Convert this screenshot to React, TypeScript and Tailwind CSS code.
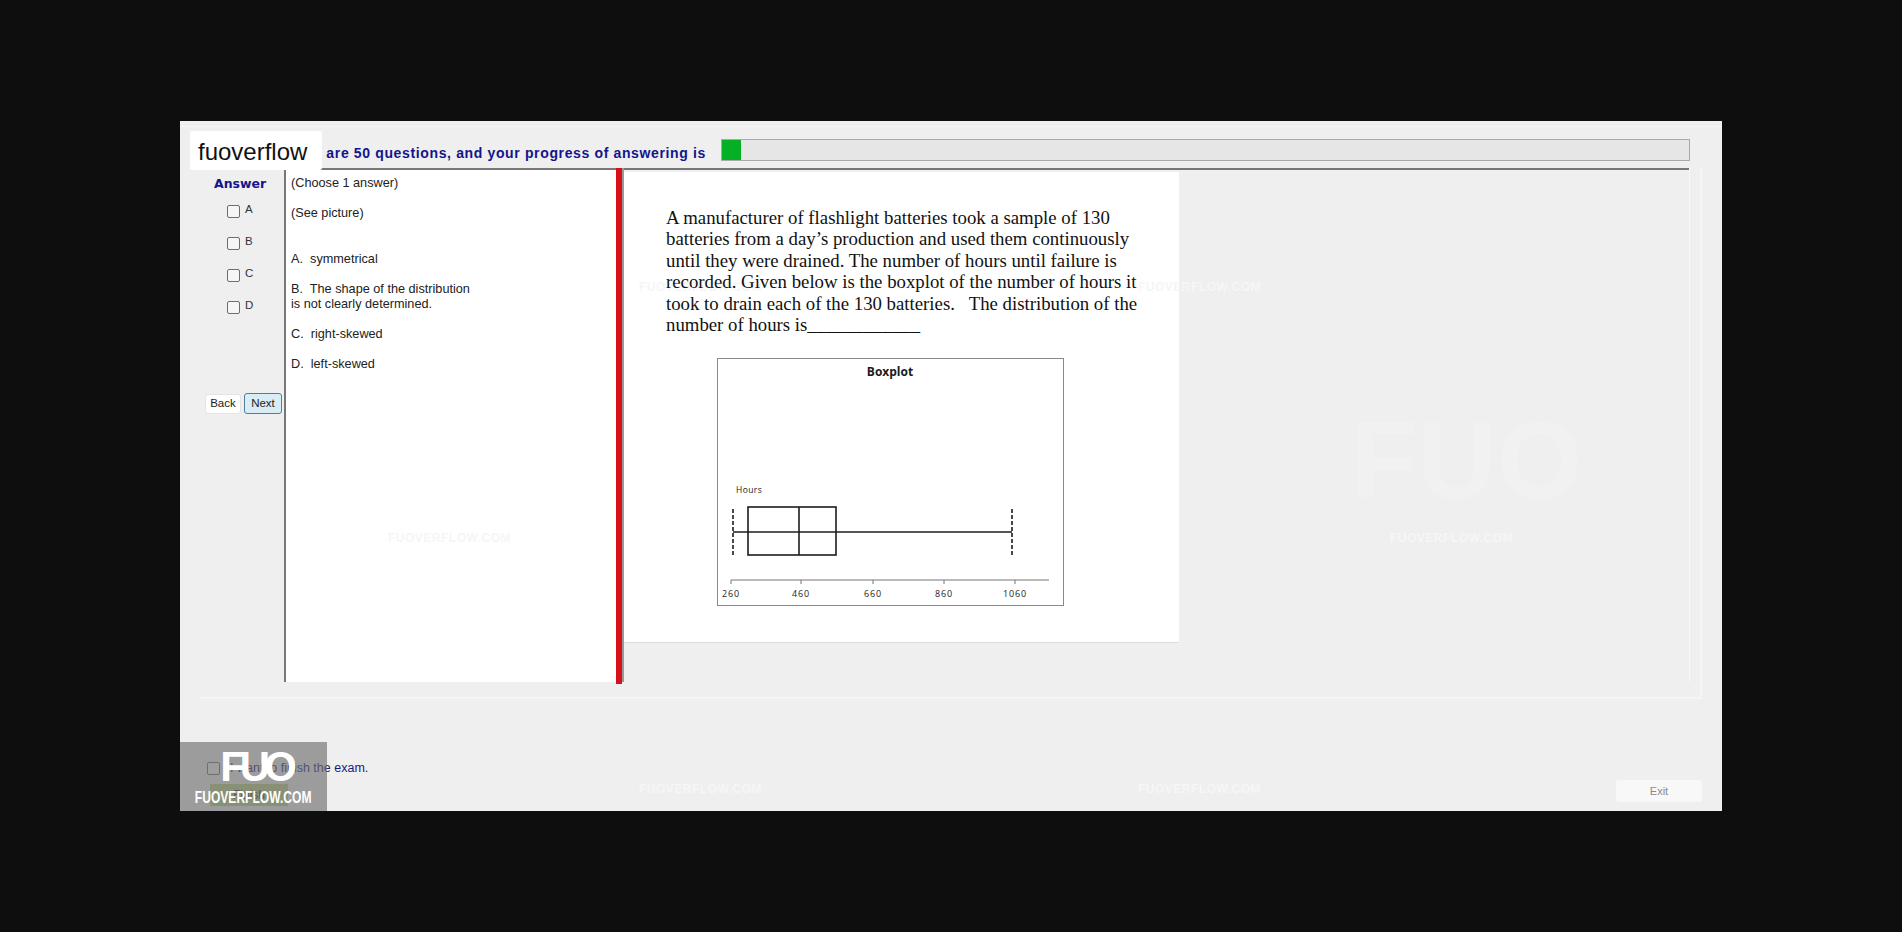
const options = ["A", "B", "C", "D"];

const marks = [
  { left: 388, top: 531 },
  { left: 889, top: 531 },
  { left: 1390, top: 531 },
  { left: 639, top: 782 },
  { left: 1138, top: 782 },
  { left: 639, top: 280 },
  { left: 1138, top: 280 },
];

const bigMarks = [345, 850, 1350];

function Check() {
  return <span className="block h-[13px] w-[13px] shrink-0 rounded-[2px] border border-[#6e6e6e] bg-[#f6f6f6]" />;
}

function Boxplot() {
  const ticks = [
    { x: 13, label: "260" },
    { x: 83, label: "460" },
    { x: 155, label: "660" },
    { x: 226, label: "860" },
    { x: 297, label: "1060" },
  ];
  return (
    <svg width="347" height="248" className="relative z-10 block border border-[#8a8a8a] bg-white">
      <text x="172" y="17" textAnchor="middle" fontSize="12" fontWeight="700" fontFamily="Open Sans, sans-serif" fill="#1a1a1a">
        Boxplot
      </text>
      <text x="18" y="134" fontSize="8.5" letterSpacing="0.4" fontFamily="Open Sans, sans-serif" fill="#222">
        Hours
      </text>
      <g stroke="#1c1c1c" strokeWidth="1.6" fill="none">
        <rect x="30" y="148" width="88" height="48" />
        <line x1="81" y1="148" x2="81" y2="196" />
        <line x1="15" y1="173" x2="294" y2="173" />
        <line x1="15" y1="150" x2="15" y2="197" strokeDasharray="4 2" />
        <line x1="294" y1="150" x2="294" y2="197" strokeDasharray="4 2" />
      </g>
      <line x1="13" y1="221" x2="331" y2="221" stroke="#777" />
      {ticks.map((t) => (
        <g key={t.label}>
          <line x1={t.x} y1="221" x2={t.x} y2="225" stroke="#777" />
          <text x={t.x} y="238" textAnchor="middle" fontSize="9" letterSpacing="0.8" fontFamily="Open Sans, sans-serif" fill="#222">
            {t.label}
          </text>
        </g>
      ))}
    </svg>
  );
}

export default function App() {
  return (
    <div className="relative h-[932px] w-[1902px] overflow-hidden bg-[#0e0e0e] pl-[180px] pt-[121px] font-['Liberation_Sans',sans-serif]">
      {/* Exam window */}
      <div className="relative flex h-[690px] w-[1542px] flex-col bg-[#efefef]">
        <div className="h-[6px] border-b border-[#f6f6f6]" />
        <div className="flex h-[34px] items-start pl-[20px] pt-[12px]">
          <div className="mt-[3px] w-[506px] whitespace-nowrap text-right text-[14px] font-bold leading-[22px] tracking-[0.64px] text-[#14148c]">
            There&nbsp;&nbsp; are 50 questions, and your progress of answering is
          </div>
          <div className="ml-[15px] h-[22px] w-[969px] border border-[#a9a9a9] bg-[#e6e6e6]">
            <div className="h-full w-[19px] bg-[#06b025]" />
          </div>
        </div>

        <div className="ml-[20px] mt-[7px] flex h-[531px] w-[1502px] shrink-0 items-start border-b-2 border-r-2 border-[#f5f5f5]">
          {/* Answer column */}
          <div className="flex h-[514px] w-[84px] shrink-0 flex-col">
            <div className="pl-[14px] pt-[8px] font-['DejaVu_Sans',sans-serif] text-[12.5px] font-bold leading-[16px] text-[#14148c]">
              Answer
            </div>
            <div className="mt-[13px] flex flex-col gap-[19px] pl-[27px]">
              {options.map((o) => (
                <div key={o} className="flex h-[13px] items-center gap-[5px] text-[11.5px] text-[#333]">
                  <Check />
                  <span className="-mt-[3px]">{o}</span>
                </div>
              ))}
            </div>
            <div className="ml-[5px] mt-[80px] flex gap-[3px] text-[11.5px] text-[#222]">
              <div className="flex h-[20px] w-[36px] items-center justify-center rounded-[3px] border border-[#e4e4e4] bg-white">
                Back
              </div>
              <div className="-mt-[1px] flex h-[21px] w-[38px] items-center justify-center rounded-[3px] border border-[#4f7f9c] bg-[#d9edf6]">
                Next
              </div>
            </div>
          </div>

          {/* Question options */}
          <div className="h-[514px] w-[332px] shrink-0 border-l-2 border-t-2 border-[#777] bg-white pl-[5px] pt-[6px] text-[12.7px] leading-[15px] text-[#222]">
            <p>(Choose 1 answer)</p>
            <p className="mt-[15px]">(See picture)</p>
            <p className="mt-[31px]">A.&nbsp; symmetrical</p>
            <p className="mt-[15px]">
              B.&nbsp; The shape of the distribution
              <br />
              is not clearly determined.
            </p>
            <p className="mt-[15px]">C.&nbsp; right-skewed</p>
            <p className="mt-[15px]">D.&nbsp; left-skewed</p>
          </div>
          <div className="h-[516px] w-[6px] shrink-0 bg-[#d8101a]" />
          <div className="h-[514px] w-[2px] shrink-0 bg-[#9a9a9a]" />

          {/* Question picture */}
          <div className="h-[514px] w-[1066px] shrink-0 border-r border-[#f8f8f8] bg-[#efefef]">
            <div className="h-[4px] border-t-2 border-[#777]" />
            <div className="h-[471px] w-[555px] border-b border-[#dcdcdc] bg-white pl-[42px] pt-[35px]">
              <p className="relative z-10 whitespace-nowrap font-['Liberation_Serif',serif] text-[18.8px] leading-[21.4px] text-[#111]">
                A manufacturer of flashlight batteries took a sample of 130
                <br />
                batteries from a day’s production and used them continuously
                <br />
                until they were drained. The number of hours until failure is
                <br />
                recorded. Given below is the boxplot of the number of hours it
                <br />
                took to drain each of the 130 batteries.&nbsp;&nbsp; The distribution of the
                <br />
                number of hours is____________
              </p>
              <div className="ml-[51px] mt-[23px]">
                <Boxplot />
              </div>
            </div>
          </div>
        </div>

        {/* Footer */}
        <div className="flex flex-1 items-start justify-between pl-[27px] pr-[20px] pt-[62px]">
          <div className="flex flex-col">
            <div className="flex items-center gap-[10px] text-[12.5px] leading-[15px] text-[#1a1a7a]">
              <Check />
              <span>I want to finish the exam.</span>
            </div>
            <div className="ml-[3px] mt-[8px] flex h-[22px] w-[78px] items-center justify-center bg-[#b8d080] text-[12px] text-[#333]">
              Finish
            </div>
          </div>
          <div className="mt-[19px] flex h-[22px] w-[86px] items-center justify-center rounded-[3px] bg-[#f8f8f8] text-[11px] text-[#8a8a8a]">
            Exit
          </div>
        </div>
      </div>

      {/* Faint background watermark */}
      {bigMarks.map((left) => (
        <div
          key={left}
          className="pointer-events-none absolute top-[400px] text-[110px] font-bold leading-[120px] text-white/15"
          style={{ left }}
        >
          FUO
        </div>
      ))}
      {marks.map((m) => (
        <div
          key={`${m.left}-${m.top}`}
          className="pointer-events-none absolute text-[12px] font-bold leading-[15px] tracking-[0.5px] text-[#f6f6f6]"
          style={{ left: m.left, top: m.top }}
        >
          FUOVERFLOW.COM
        </div>
      ))}

      {/* Site label, top left */}
      <div className="absolute left-[190px] top-[131px] z-20 flex h-[39px] w-[132px] items-center rounded-[2px] bg-white pl-[8px] pt-[2px] text-[24px] text-[#111]">
        fuoverflow
      </div>

      {/* Logo badge, bottom left */}
      <div className="absolute left-[180px] top-[742px] z-20 flex h-[69px] w-[147px] flex-col items-center overflow-hidden bg-[#6e6e6e]/65 text-white">
        <div className="ml-[4px] mt-[5px] text-[42px] font-bold leading-[40px] tracking-[-6px]">FUO</div>
        <div className="mt-[1px] scale-x-[0.71] whitespace-nowrap text-[17px] font-bold leading-[20px]">
          FUOVERFLOW.COM
        </div>
      </div>
    </div>
  );
}
